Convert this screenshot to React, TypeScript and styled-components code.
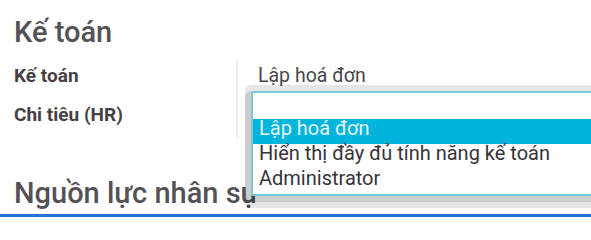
import React from "react";
import styled, { createGlobalStyle } from "styled-components";

const Global = createGlobalStyle`
  html, body {
    margin: 0;
    padding: 0;
    background: #ffffff;
    overflow: hidden;
  }
  body {
    font-family: Roboto, "Noto Sans", "Liberation Sans", sans-serif;
  }
`;

const Page = styled.div`
  position: relative;
  width: 591px;
  height: 221px;
  overflow: hidden;
  padding-top: 14px;
  box-sizing: border-box;
  display: flex;
  flex-direction: column;
`;

const SectionTitle = styled.h2<{ $gapTop?: number }>`
  margin: ${(p) => p.$gapTop ?? 0}px 0 0 0;
  padding-left: 14px;
  font-size: 29px;
  font-weight: 500;
  line-height: 36px;
  color: #555257;
`;

const FormGrid = styled.div`
  margin-top: 10px;
  display: grid;
  grid-template-columns: 236px 1fr;
`;

const LabelCell = styled.div`
  padding: 2px 0 10px 14px;
  font-size: 19px;
  font-weight: 700;
  line-height: 27px;
  color: #473f42;
`;

const ValueCell = styled.div`
  position: relative;
  border-left: 2px solid #ececec;
  padding: 2px 0 10px 20px;
  font-size: 19.5px;
  font-weight: 400;
  line-height: 27px;
  color: #4a4548;
  min-height: 27px;
`;

const OptionList = styled.ul`
  position: absolute;
  z-index: 2;
  left: 13px;
  top: -8px;
  width: 400px;
  margin: 0;
  padding: 0;
  list-style: none;
  background: #ffffff;
  border: 2px solid #79c9dc;
  border-radius: 2px;
  box-shadow: 0 0 0 6px rgba(0, 0, 0, 0.1), 0 6px 0 6px rgba(0, 0, 0, 0.1);
`;

const Option = styled.li<{ $active?: boolean; $first?: boolean }>`
  height: ${(p) => (p.$first ? 26 : 25)}px;
  box-sizing: border-box;
  padding: ${(p) => (p.$first ? 1 : 0)}px 0 6px 6px;
  font-size: 20px;
  line-height: 19px;
  white-space: nowrap;
  color: ${(p) => (p.$active ? "#e4f6fa" : "#38323a")};
  background: ${(p) => (p.$active ? "#00b5dc" : "transparent")};
`;

const BottomRule = styled.div`
  margin-top: 3px;
  height: 3px;
  background: #1f74dd;
`;

const options = [
  "",
  "Lập hoá đơn",
  "Hiển thị đầy đủ tính năng kế toán",
  "Administrator",
];

export default function App() {
  return (
    <>
      <Global />
      <Page>
        <SectionTitle>Kế toán</SectionTitle>
        <FormGrid>
          <LabelCell>Kế toán</LabelCell>
          <ValueCell>Lập hoá đơn</ValueCell>
          <LabelCell>Chi tiêu (HR)</LabelCell>
          <ValueCell>
            <OptionList>
              {options.map((o, i) => (
                <Option key={i} $first={i === 0} $active={i === 1}>
                  {o}
                </Option>
              ))}
            </OptionList>
          </ValueCell>
        </FormGrid>
        <SectionTitle $gapTop={37}>Nguồn lực nhân sự</SectionTitle>
        <BottomRule />
      </Page>
    </>
  );
}
